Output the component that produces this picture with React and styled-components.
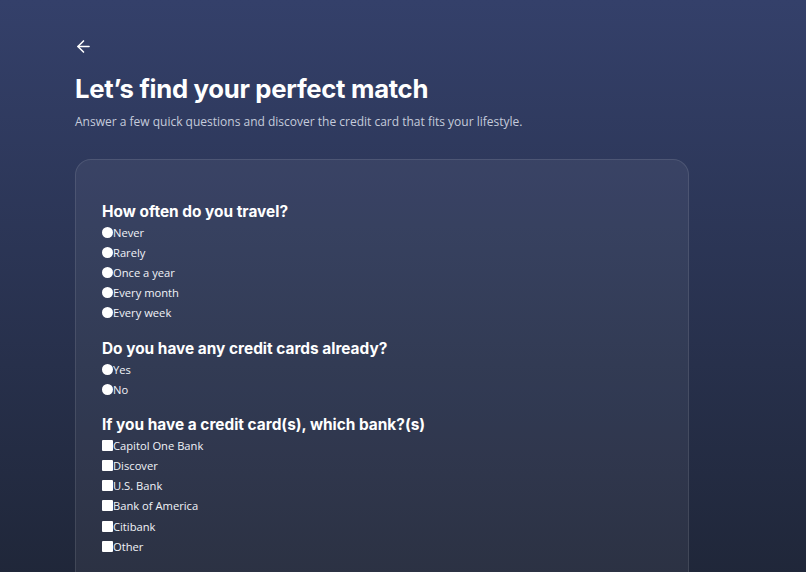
import React from "react";
import styled, { createGlobalStyle } from "styled-components";

const Global = createGlobalStyle`
  html, body { margin: 0; padding: 0; }
  body {
    background: linear-gradient(180deg, #34406a 0%, #1f2638 100%);
    min-height: 572px;
    font-family: "Open Sans", "Liberation Sans", sans-serif;
    color: #fff;
  }
`;

const Page = styled.div`
  min-height: 572px;
  padding: 36px 0 0 75px;
  box-sizing: border-box;
  display: flex;
  flex-direction: column;
`;

const BackButton = styled.button`
  background: none;
  border: none;
  padding: 0;
  margin: 0 0 17px -2px;
  width: 20px;
  height: 20px;
  display: flex;
  align-items: center;
  justify-content: center;
  color: #fff;
  cursor: pointer;
`;

const Title = styled.h1`
  font-family: Inter, "Liberation Sans", sans-serif;
  font-weight: 700;
  font-size: 25.7px;
  line-height: 32px;
  letter-spacing: -0.3px;
  margin: 0;
  color: #fff;
`;

const Subtitle = styled.p`
  margin: 8px 0 0;
  font-size: 12px;
  line-height: 18px;
  color: #c5cbdb;
`;

const Card = styled.form`
  margin-top: 28px;
  width: 614px;
  box-sizing: border-box;
  padding: 42px 26px 32px;
  border-radius: 16px;
  background: rgba(255, 255, 255, 0.055);
  border: 1px solid rgba(255, 255, 255, 0.1);
  display: flex;
  flex-direction: column;
  gap: 16px;
`;

const Question = styled.fieldset`
  border: none;
  margin: 0;
  padding: 0;
  display: flex;
  flex-direction: column;
`;

const QuestionTitle = styled.legend`
  font-family: Inter, "Liberation Sans", sans-serif;
  font-weight: 700;
  font-size: 15.4px;
  line-height: 20px;
  padding: 0;
  margin: 0;
  color: #fff;
`;

const Option = styled.label`
  display: flex;
  align-items: center;
  height: 20.2px;
  font-size: 11.2px;
  color: #f1f3f8;
  cursor: pointer;
`;

const Control = styled.input`
  appearance: none;
  -webkit-appearance: none;
  margin: 0;
  width: 11px;
  height: 11px;
  background: #fff;
  border-radius: ${(p) => (p.type === "radio" ? "50%" : "1px")};
  flex: none;
`;

const questions = [
  {
    name: "travel",
    type: "radio",
    title: "How often do you travel?",
    options: ["Never", "Rarely", "Once a year", "Every month", "Every week"],
  },
  {
    name: "cards",
    type: "radio",
    title: "Do you have any credit cards already?",
    options: ["Yes", "No"],
  },
  {
    name: "banks",
    type: "checkbox",
    title: "If you have a credit card(s), which bank?(s)",
    options: ["Capitol One Bank", "Discover", "U.S. Bank", "Bank of America", "Citibank", "Other"],
  },
];

export default function App() {
  return (
    <>
      <Global />
      <Page>
        <BackButton type="button" aria-label="Back">
          <svg width="19" height="19" viewBox="0 0 24 24" fill="none" stroke="currentColor" strokeWidth="2" strokeLinecap="round" strokeLinejoin="round">
            <path d="M19 12H5" />
            <path d="M12 19l-7-7 7-7" />
          </svg>
        </BackButton>
        <Title>Let’s find your perfect match</Title>
        <Subtitle>Answer a few quick questions and discover the credit card that fits your lifestyle.</Subtitle>
        <Card>
          {questions.map((q) => (
            <Question key={q.name}>
              <QuestionTitle>{q.title}</QuestionTitle>
              {q.options.map((o) => (
                <Option key={o}>
                  <Control type={q.type} name={q.name} value={o} />
                  {o}
                </Option>
              ))}
            </Question>
          ))}
        </Card>
      </Page>
    </>
  );
}
